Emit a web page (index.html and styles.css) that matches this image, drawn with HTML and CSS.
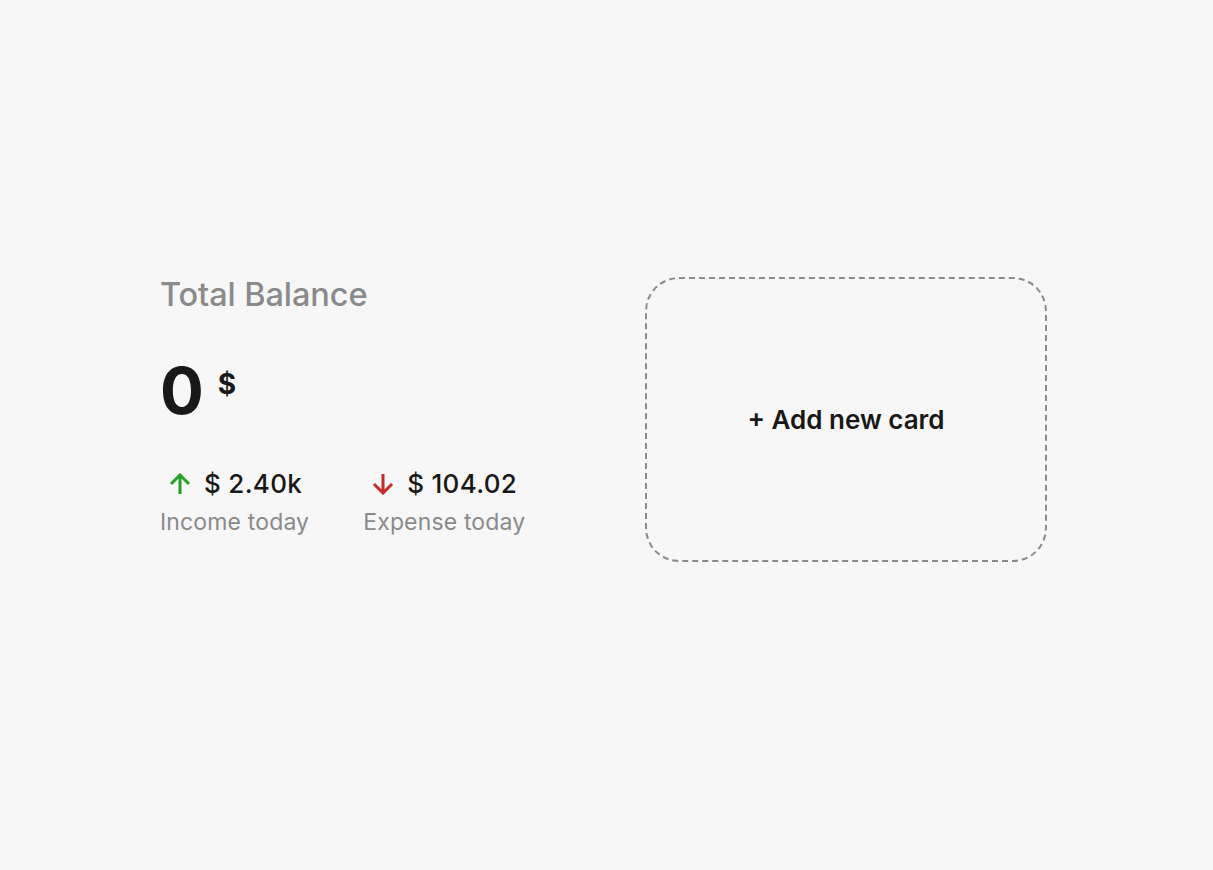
FILE: index.html
```html
<!DOCTYPE html>
<html lang="en">
<head>
<meta charset="utf-8">
<title>Balance</title>
<link rel="stylesheet" href="styles.css">
</head>
<body>
<main class="page">
  <section class="balance">
    <h2 class="title">Total Balance</h2>
    <div class="amount"><span class="big">0</span><span class="cur">$</span></div>
    <div class="stats">
      <div class="stat">
        <div class="val">
          <svg class="arrow" viewBox="0 0 22 22" width="22" height="22"><path d="M11 21V2.5M2 11L11 2L20 11" fill="none" stroke="#25a125" stroke-width="3"/></svg>
          <span>$ 2.40k</span>
        </div>
        <div class="lbl">Income today</div>
      </div>
      <div class="stat">
        <div class="val">
          <svg class="arrow" viewBox="0 0 22 22" width="22" height="22"><path d="M11 1V19.5M2 11L11 20L20 11" fill="none" stroke="#c62a2a" stroke-width="3"/></svg>
          <span>$ 104.02</span>
        </div>
        <div class="lbl">Expense today</div>
      </div>
    </div>
  </section>
  <button class="add-card">+ Add new card</button>
</main>
</body>
</html>
```
FILE: styles.css
```css
html, body {
  margin: 0;
  padding: 0;
  background: #f7f7f7;
  font-family: Inter, "Noto Sans", sans-serif;
  color: #181818;
}
.page {
  display: flex;
  align-items: flex-start;
  justify-content: center;
  gap: 120px;
  padding: 277px 6px 0 0;
}
.balance {
  width: 365px;
  margin-top: -2px;
}
.title {
  margin: 0;
  font-size: 32.5px;
  font-weight: 500;
  color: #8a8a8a;
  letter-spacing: -0.1px;
  line-height: 40px;
}
.amount {
  display: flex;
  align-items: flex-start;
  gap: 14px;
  margin-top: 45px;
}
.big {
  font-size: 65px;
  font-weight: 700;
  line-height: 62px;
}
.cur {
  font-size: 28px;
  font-weight: 700;
  line-height: 30px;
  margin-top: 9px;
}
.stats {
  display: flex;
  gap: 54px;
  margin-top: 47px;
}
.stat {
  white-space: nowrap;
}
.val {
  display: flex;
  align-items: center;
  gap: 13px;
  font-size: 26px;
  font-weight: 500;
  letter-spacing: 0.3px;
  line-height: 30px;
  padding-left: 9px;
}
.arrow { display: block; }
.lbl {
  font-size: 23px;
  color: #8a8a8a;
  letter-spacing: 0.15px;
  line-height: 30px;
  margin-top: 8px;
}
.add-card {
  width: 402px;
  height: 285px;
  border: 2px dashed #8a8a8a;
  border-radius: 34px;
  background: transparent;
  font-family: Inter, "Noto Sans", sans-serif;
  font-size: 26px;
  font-weight: 600;
  color: #181818;
  padding: 0;
}
```
